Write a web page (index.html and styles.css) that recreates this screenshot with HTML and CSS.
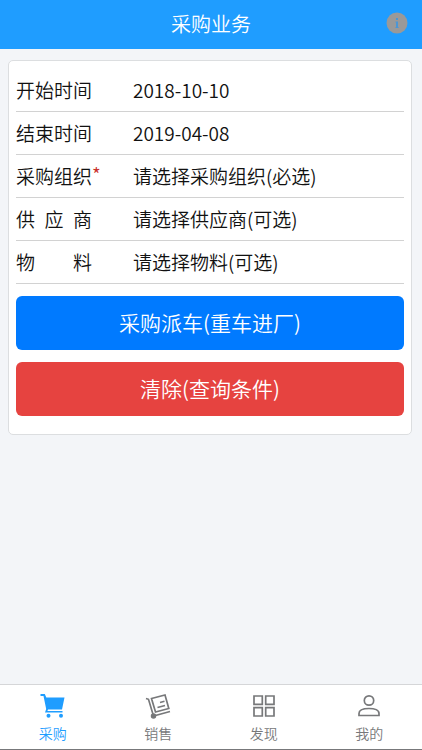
FILE: index.html
```
<!DOCTYPE html>
<html lang="zh-CN">
<head>
    <meta charset="UTF-8">
    <meta name="viewport" content="width=device-width, initial-scale=1.0">
    <title>采购业务</title>
    <link rel="stylesheet" href="styles.css">
</head>
<body>

<header class="top-bar">
    <h1>采购业务</h1>
    <button class="info-btn" type="button" aria-label="说明">
        <svg viewBox="0 0 22 22" width="22" height="22">
            <circle cx="11" cy="11" r="10.5" fill="#999"/>
            <rect x="10" y="6" width="2" height="2" fill="#4a96d6"/>
            <path d="M9.500 9.500h2.500v5.500h.6v1H9.500v-1h.5v-4.500h-.5z" fill="#4a96d6"/>
        </svg>
    </button>
</header>

<main>
    <form class="card">
        <div class="row">
            <label for="startDate">开始时间</label>
            <input id="startDate" type="text" value="2018-10-10">
        </div>
        <div class="row">
            <label for="endDate">结束时间</label>
            <input id="endDate" type="text" value="2019-04-08">
        </div>
        <div class="row">
            <label for="org" class="required">采购组织</label>
            <select id="org"><option>请选择采购组织(必选)</option></select>
        </div>
        <div class="row">
            <label for="supplier">供 应 商</label>
            <select id="supplier"><option>请选择供应商(可选)</option></select>
        </div>
        <div class="row">
            <label for="material">物 料</label>
            <select id="material"><option>请选择物料(可选)</option></select>
        </div>
        <button class="btn primary" type="button">采购派车(重车进厂)</button>
        <button class="btn danger" type="reset">清除(查询条件)</button>
    </form>
</main>

<nav class="tab-bar">
    <a href="#purchase" class="active">
        <svg viewBox="0 0 26 26">
            <path d="M.5 1h4.300l1.500 3.500H24.500L22 16.500H8l-.6 1.500H22.500v1.600H5l1.200-3.600L3.500 3H.5z" fill="currentColor"/>
            <circle cx="8.500" cy="22.800" r="2" fill="currentColor"/>
            <circle cx="21" cy="22.800" r="2" fill="currentColor"/>
        </svg>
        <span>采购</span>
    </a>
    <a href="#sales">
        <svg viewBox="0 0 26 26" fill="none" stroke="currentColor" stroke-width="1.700">
            <path d="M1 5.500l2.500.8L8.500 23 25 18.500"/>
            <path d="M6.500 5.500L20 2l3.800 13.500L10.500 19z"/>
            <path d="M15 9.500l4.500-1.200M12.500 14.500l7.500-2"/>
            <circle cx="8.500" cy="23" r="1.900" fill="currentColor"/>
        </svg>
        <span>销售</span>
    </a>
    <a href="#discover">
        <svg viewBox="0 0 26 26" fill="none" stroke="currentColor" stroke-width="1.700">
            <path d="M3 3h8.300v8.300H3zM14.700 3H23v8.300h-8.300zM3 14.700h8.300V23H3zM14.700 14.700H23V23h-8.300z"/>
        </svg>
        <span>发现</span>
    </a>
    <a href="#mine">
        <svg viewBox="0 0 26 26" fill="none" stroke="currentColor" stroke-width="1.700">
            <circle cx="13" cy="7.500" r="4.700"/>
            <path d="M3 22.500v-2c0-3 4-5 10-5s10 2 10 5v2z"/>
        </svg>
        <span>我的</span>
    </a>
</nav>

</body>
</html>
```
FILE: styles.css
```
:root {
    --bar-blue: #1f9dff;
    --page-bg: #f3f5f8;
    --line: #d2d2d2;
    --text: #111;
    --muted: #77787a;
}
* {
    box-sizing: border-box;
}
body {
    margin: 0;
    min-height: 100vh;
    display: flex;
    flex-direction: column;
    background: var(--page-bg);
    color: var(--text);
    font-family: "Noto Sans CJK SC", sans-serif;
    font-weight: 350;
}
.top-bar {
    position: relative;
    height: 49px;
    display: flex;
    align-items: center;
    justify-content: center;
    padding-bottom: 2px;
    background: var(--bar-blue);
    color: #fff;
}
h1 {
    margin: 0;
    font-size: 20px;
    font-weight: 350;
}
.info-btn {
    position: absolute;
    right: 14px;
    top: 12px;
    padding: 0;
    border: none;
    background: none;
}
.info-btn svg {
    display: block;
}
main {
    flex: 1;
    padding: 11px 10px 11px 8px;
}
.card {
    padding: 8px 7px 18px;
    border: 1px solid #dcdee0;
    border-radius: 5px;
    background: #fff;
}
.row {
    display: flex;
    align-items: center;
    gap: 41px;
    height: 43px;
    padding-bottom: 2px;
    border-bottom: 1px solid var(--line);
    font-size: 19px;
}
.row label {
    position: relative;
    width: 76px;
    text-align-last: justify;
}
.required::after {
    content: "*";
    position: absolute;
    left: 100%;
    top: -2px;
    font-size: 19px;
    color: #c9302c;
}
.row input,
.row select {
    flex: 1;
    min-width: 0;
    padding: 0;
    border: none;
    outline: none;
    appearance: none;
    background: none;
    color: inherit;
    font: inherit;
}
.btn {
    display: block;
    width: 100%;
    height: 54px;
    margin-top: 12px;
    padding: 0 0 2px;
    border: none;
    border-radius: 6px;
    color: #fff;
    font-family: inherit;
    font-size: 21px;
    font-weight: 350;
}
.primary {
    background: #007aff;
}
.danger {
    background: #e64340;
}
.tab-bar {
    display: flex;
    height: 66px;
    border-top: 1px solid #d5d6d8;
    border-bottom: 1px solid #77787a;
    background: #fff;
}
.tab-bar a {
    flex: 1;
    display: flex;
    flex-direction: column;
    align-items: center;
    padding-top: 8px;
    color: var(--muted);
    font-size: 14px;
    line-height: 20px;
    text-decoration: none;
}
.tab-bar svg {
    width: 26px;
    height: 26px;
    margin-bottom: 4px;
}
.tab-bar .active {
    color: var(--bar-blue);
}
```
